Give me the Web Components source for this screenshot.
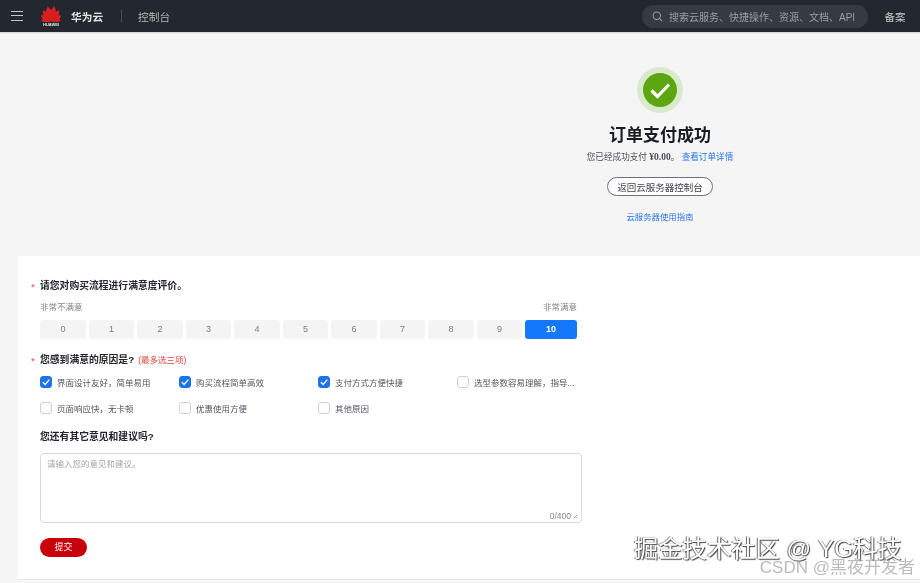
<!DOCTYPE html>
<html lang="zh">
<head>
<meta charset="utf-8">
<title>订单支付成功</title>
<style>
  html, body { margin: 0; height: 100%; }
  body {
    background: #f5f5f6;
    font-family: "Liberation Sans", "Noto Sans CJK SC", sans-serif;
    color: #252b3a;
    overflow: hidden;
    position: relative;
    filter: blur(.3px);
  }
</style>
</head>
<body>
<top-bar></top-bar>
<pay-result></pay-result>
<survey-card>
  <survey-title required>请您对购买流程进行满意度评价。</survey-title>
  <score-scale low="非常不满意" high="非常满意" value="10"></score-scale>
  <survey-title required note="(最多选三项)" style="margin-top:14px">您感到满意的原因是?</survey-title>
  <reason-grid>
    <reason-check checked>界面设计友好，简单易用</reason-check>
    <reason-check checked>购买流程简单高效</reason-check>
    <reason-check checked>支付方式方便快捷</reason-check>
    <reason-check>选型参数容易理解，指导...</reason-check>
    <reason-check>页面响应快，无卡顿</reason-check>
    <reason-check>优惠使用方便</reason-check>
    <reason-check>其他原因</reason-check>
  </reason-grid>
  <survey-title style="margin-top:16px">您还有其它意见和建议吗?</survey-title>
  <comment-box placeholder="请输入您的意见和建议。" max="400"></comment-box>
  <submit-button>提交</submit-button>
</survey-card>
<water-marks></water-marks>

<script>
// small helper, every element just sets its shadow markup once
class Base extends HTMLElement {
  render(html) {
    this.attachShadow({ mode: 'open' }).innerHTML = html;
  }
}

class TopBar extends Base {
  connectedCallback() {
    // fan of petals, long at the top and short at the sides
    const petals = [[13, 18], [38, 16], [62, 14], [85, 12]].map(([a, len]) => {
      const s = len / 10;
      return [a, -a].map(r =>
        `<path d="M0 0C-3.2-3-3.2-7 0-10C3.2-7 3.2-3 0 0Z" transform="translate(12 19) rotate(${r}) scale(${s * .85} ${s})"/>`
      ).join('');
    }).join('');
    this.render(`
      <style>
        :host { display: flex; align-items: center; height: 32px; background: #23272e; color: #dfe1e6; box-shadow: 0 1px 1px #d8d8da; }
        .menu { width: 12px; height: 10px; margin-left: 11px; border-top: 1.5px solid #c3c5c9; border-bottom: 1.5px solid #c3c5c9; position: relative; box-sizing: border-box; }
        .menu::after { content: ""; position: absolute; left: 0; right: 0; top: 2.75px; height: 1.5px; background: #c3c5c9; }
        .logo { display: flex; flex-direction: column; align-items: center; margin: 0 0 0 18px; width: 20px; }
        .logo svg { display: block; width: 20px; height: 17px; fill: #d7201f; }
        .logo span { font-size: 4px; line-height: 5px; font-weight: 700; color: #e6e6e6; white-space: nowrap; }
        .brand { margin-left: 10px; font-size: 10.7px; font-weight: 700; color: #e4e5e8; }
        .sep { width: 1px; height: 12px; background: #4a4e55; margin: 0 16px 0 18px; }
        .console { font-size: 10.7px; color: #b6b8bc; }
        .search { margin-left: auto; width: 226px; height: 23px; border-radius: 12px; background: #363a42; display: flex; align-items: center; box-sizing: border-box; padding-left: 10px; color: #9a9da3; font-size: 10px; white-space: nowrap; }
        .search svg { width: 11px; height: 11px; margin-right: 6px; flex: none; }
        .beian { width: 52px; padding-left: 2px; box-sizing: border-box; text-align: center; font-size: 10.5px; color: #c9cbce; }
      </style>
      <div class="menu"></div>
      <div class="logo">
        <svg viewBox="0 0 24 20">${petals}</svg>
        <span>HUAWEI</span>
      </div>
      <span class="brand">华为云</span>
      <div class="sep"></div>
      <span class="console">控制台</span>
      <div class="search">
        <svg viewBox="0 0 12 12" fill="none" stroke="#a0a3a8" stroke-width="1.1"><circle cx="5.2" cy="5.2" r="4"/><path d="M8.2 8.2L11 11"/></svg>
        搜索云服务、快捷操作、资源、文档、API
      </div>
      <span class="beian">备案</span>
    `);
  }
}

class PayResult extends Base {
  connectedCallback() {
    this.render(`
      <style>
        :host { display: flex; flex-direction: column; align-items: center; height: 224px; box-sizing: border-box; padding: 35px 0 0 400px; }
        svg { display: block; width: 46px; height: 46px; }
        h1 { margin: 11px 0 0; font-size: 17px; line-height: 23px; font-weight: 700; color: #191c22; }
        p { margin: 4px 0 0; font-size: 8.6px; line-height: 13px; color: #4a4e57; }
        b { font-family: "Liberation Serif", serif; font-size: 9.5px; }
        a { color: #2a76e8; }
        button { margin-top: 13px; width: 106px; height: 19px; padding: 0; border: 1px solid #6e7078; border-radius: 10px; background: #fff; color: #40444c; font: 9.5px "Liberation Sans", "Noto Sans CJK SC", sans-serif; }
        .guide { margin-top: 15px; font-size: 8.4px; line-height: 13px; }
      </style>
      <svg viewBox="0 0 46 46">
        <circle cx="23" cy="23" r="23" fill="#d9e9cb"/>
        <circle cx="23" cy="23" r="17" fill="#5ca70f"/>
        <path d="M14.5 23.5L20.5 29.5L32 17.5" fill="none" stroke="#fff" stroke-width="3.2"/>
      </svg>
      <h1>订单支付成功</h1>
      <p>您已经成功支付 <b>¥0.00</b>。 <a>查看订单详情</a></p>
      <button>返回云服务器控制台</button>
      <a class="guide">云服务器使用指南</a>
    `);
  }
}

class SurveyCard extends Base {
  connectedCallback() {
    this.render(`
      <style>
        :host { display: block; margin-left: 18px; height: 324px; box-sizing: border-box; padding: 23px 0 0 22px; background: #fff; border-bottom: 1px solid #e8e8ea; }
      </style>
      <slot></slot>
    `);
  }
}

class SurveyTitle extends Base {
  connectedCallback() {
    const star = this.hasAttribute('required') ? '<i>*</i>' : '';
    const note = this.getAttribute('note');
    this.render(`
      <style>
        :host { display: block; position: relative; font-size: 9.8px; line-height: 14px; font-weight: 700; color: #23262d; }
        i { position: absolute; left: -9px; top: 1px; color: #e2433b; font-style: normal; font-weight: 400; }
        span { margin-left: 4px; color: #e2433b; font-size: 8.5px; font-weight: 400; }
      </style>
      ${star}<slot></slot>${note ? `<span>${note}</span>` : ''}
    `);
  }
}

class ScoreScale extends Base {
  connectedCallback() {
    const value = this.getAttribute('value');
    let cells = '';
    for (let i = 0; i <= 10; i++) {
      cells += `<div class="${i == value ? 'on' : ''}">${i}</div>`;
    }
    this.render(`
      <style>
        :host { display: block; width: 537px; margin-top: 8px; }
        .ends { display: flex; justify-content: space-between; font-size: 8.5px; line-height: 12px; color: #83868d; }
        .cells { display: flex; gap: 2.6px; margin-top: 7px; }
        .cells div { flex: 1; height: 19px; line-height: 19px; text-align: center; font-size: 9px; background: #f4f4f5; border-radius: 3px; color: #7b7e84; }
        .cells .on { flex: none; width: 52px; background: #1478fa; color: #fff; font-weight: 700; }
      </style>
      <div class="ends"><span>${this.getAttribute('low')}</span><span>${this.getAttribute('high')}</span></div>
      <div class="cells">${cells}</div>
    `);
  }
}

class ReasonGrid extends Base {
  connectedCallback() {
    this.render(`
      <style>
        :host { display: grid; grid-template-columns: repeat(4, 139px); row-gap: 14px; margin-top: 9px; }
      </style>
      <slot></slot>
    `);
  }
}

class ReasonCheck extends Base {
  connectedCallback() {
    const on = this.hasAttribute('checked');
    this.render(`
      <style>
        :host { display: flex; align-items: center; gap: 5px; height: 12px; font-size: 8.5px; color: #53565e; white-space: nowrap; }
        .box { width: 12px; height: 12px; border-radius: 3px; box-sizing: border-box; border: 1px solid #cfd0d3; background: #fff; flex: none; }
        .box.on { background: #1d74ea; border-color: #1d74ea; }
        svg { display: block; width: 10px; height: 10px; }
      </style>
      <div class="box ${on ? 'on' : ''}">${on ? '<svg viewBox="0 0 9 9"><path d="M1.6 4.6L3.7 6.7L7.5 2.4" fill="none" stroke="#fff" stroke-width="1.2"/></svg>' : ''}</div>
      <slot></slot>
    `);
  }
}

class CommentBox extends Base {
  connectedCallback() {
    this.render(`
      <style>
        :host { display: flex; flex-direction: column; justify-content: space-between; box-sizing: border-box; width: 542px; height: 70px; margin-top: 9px; padding: 4px 3px 0 6px; border: 1px solid #d9d9db; border-radius: 4px; background: #fff; font-size: 8.5px; line-height: 12px; color: #a3a5aa; }
        .count { align-self: flex-end; color: #85888e; display: flex; align-items: center; gap: 2px; }
        svg { width: 5px; height: 5px; }
      </style>
      <div>${this.getAttribute('placeholder')}</div>
      <div class="count">0/${this.getAttribute('max')}<svg viewBox="0 0 5 5"><path d="M0.5 4.5L4.5 0.5M2.8 4.5L4.5 2.8" stroke="#85888e" stroke-width="0.7"/></svg></div>
    `);
  }
}

class SubmitButton extends Base {
  connectedCallback() {
    this.render(`
      <style>
        :host { display: block; width: 47px; height: 19px; margin-top: 15px; border-radius: 10px; background: #c7000b; color: #fff; font-size: 9px; line-height: 19px; text-align: center; }
      </style>
      <slot></slot>
    `);
  }
}

class WaterMarks extends Base {
  connectedCallback() {
    this.render(`
      <style>
        .juejin { position: absolute; left: 634px; top: 534px; font-size: 24.3px; line-height: 30px; color: #fff; text-shadow: 1px 1px 1px #444, -1px 0 1px #666; white-space: nowrap; }
        .csdn { position: absolute; right: 5px; top: 557px; font-size: 17px; line-height: 22px; color: rgba(120,120,120,.5); white-space: nowrap; }
      </style>
      <div class="juejin">掘金技术社区 @ YG科技</div>
      <div class="csdn">CSDN @黑夜开发者</div>
    `);
  }
}

customElements.define('top-bar', TopBar);
customElements.define('pay-result', PayResult);
customElements.define('survey-card', SurveyCard);
customElements.define('survey-title', SurveyTitle);
customElements.define('score-scale', ScoreScale);
customElements.define('reason-grid', ReasonGrid);
customElements.define('reason-check', ReasonCheck);
customElements.define('comment-box', CommentBox);
customElements.define('submit-button', SubmitButton);
customElements.define('water-marks', WaterMarks);
</script>
</body>
</html>
